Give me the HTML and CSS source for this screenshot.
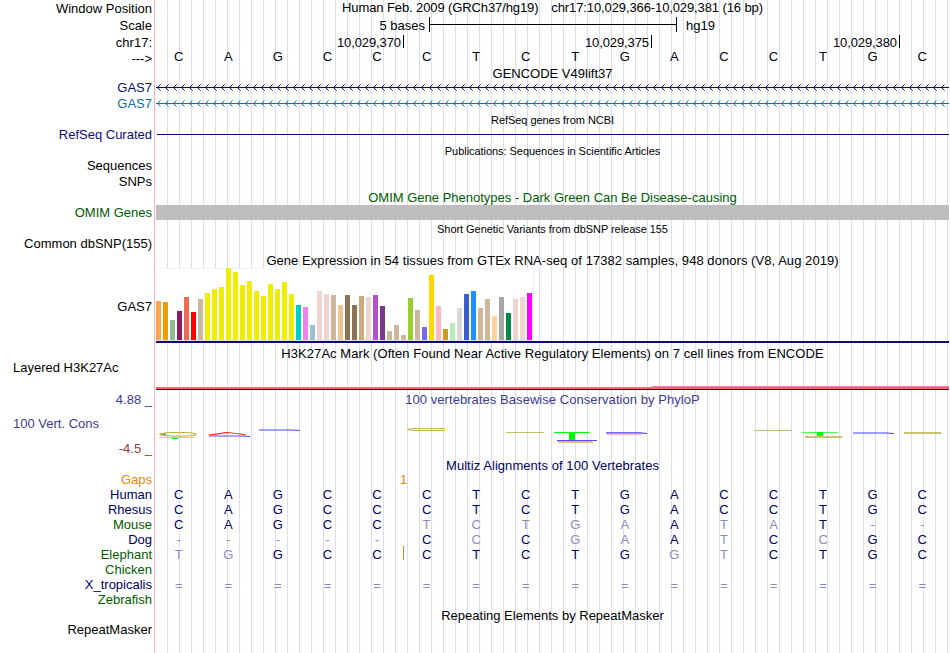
FILE: index.html
```
<!DOCTYPE html>
<html lang="en">
<head>
  <meta charset="UTF-8">
  <title>Human chr17:10,029,366-10,029,381 Genome Browser</title>
  <link rel="stylesheet" href="styles.css">
</head>
<body>
  <div class="browser">
    <div class="row h17">
      <div class="label">Window Position</div>
      <div class="plot position"><span>Human Feb. 2009 (GRCh37/hg19)</span><span>chr17:10,029,366-10,029,381 (16 bp)</span></div>
    </div>
    <div class="row h17">
      <div class="label">Scale</div>
      <div class="plot scale"><span class="scale-text">5 bases</span><span class="scale-bar"></span><span>hg19</span></div>
    </div>
    <div class="row h16">
      <div class="label low">chr17:</div>
      <div class="plot ruler"><span class="tick">10,029,370</span><span class="tick">10,029,375</span><span class="tick">10,029,380</span></div>
    </div>
    <div class="row h16">
      <div class="label low">---&gt;</div>
      <div class="plot bases black" data-seq="CAGCCCTCTGACCTGC"></div>
    </div>

    <div class="row h14"><div class="label"></div><div class="plot title">GENCODE V49lift37</div></div>
    <div class="row h15">
      <div class="label navy">GAS7</div>
      <svg class="plot gene navy" width="793" height="15">
        <defs>
          <pattern id="chevron" width="8" height="15" patternUnits="userSpaceOnUse">
            <path d="M4.5 4.5L1.5 7.5L4.5 10.5" fill="none" stroke="currentColor"/>
          </pattern>
        </defs>
        <rect width="793" height="15" fill="url(#chevron)"/>
        <rect y="7" width="793" height="1" fill="currentColor"/>
      </svg>
    </div>
    <div class="row h16">
      <div class="label blue low">GAS7</div>
      <svg class="plot gene blue" width="793" height="16">
        <defs>
          <pattern id="chevron2" width="8" height="16" patternUnits="userSpaceOnUse">
            <path d="M4.5 5.5L1.5 8.5L4.5 11.5" fill="none" stroke="currentColor"/>
          </pattern>
        </defs>
        <rect width="793" height="16" fill="url(#chevron2)"/>
        <rect y="8" width="793" height="1" fill="currentColor"/>
      </svg>
    </div>

    <div class="row h16"><div class="label"></div><div class="plot title small">RefSeq genes from NCBI</div></div>
    <div class="row h15">
      <div class="label navy">RefSeq Curated</div>
      <div class="plot"><div class="refseq-line"></div></div>
    </div>

    <div class="row h16"><div class="label"></div><div class="plot title small">Publications: Sequences in Scientific Articles</div></div>
    <div class="row h15"><div class="label">Sequences</div></div>
    <div class="row h16"><div class="label low">SNPs</div></div>

    <div class="row h16"><div class="label"></div><div class="plot title green">OMIM Gene Phenotypes - Dark Green Can Be Disease-causing</div></div>
    <div class="row h15">
      <div class="label green">OMIM Genes</div>
      <div class="plot omim-block"></div>
    </div>

    <div class="row h16"><div class="label"></div><div class="plot title small">Short Genetic Variants from dbSNP release 155</div></div>
    <div class="row h16"><div class="label">Common dbSNP(155)</div></div>

    <div class="row h16"><div class="label"></div><div class="plot title wide">Gene Expression in 54 tissues from GTEx RNA-seq of 17382 samples, 948 donors (V8, Aug 2019)</div></div>
    <div class="row h77">
      <div class="label">GAS7</div>
      <div class="plot gtex">
        <div class="bars" id="bars"></div>
        <div class="gene-model"></div>
      </div>
    </div>

    <div class="row h16"><div class="label"></div><div class="plot title wide">H3K27Ac Mark (Often Found Near Active Regulatory Elements) on 7 cell lines from ENCODE</div></div>
    <div class="row h30">
      <div class="label left">Layered H3K27Ac</div>
      <div class="plot h3k">
        <div class="h3k-pink"></div>
        <div class="h3k-red"></div>
      </div>
    </div>

    <div class="row h16">
      <div class="label cons low">4.88 _</div>
      <div class="plot title wide cons">100 vertebrates Basewise Conservation by PhyloP</div>
    </div>
    <div class="row h50">
      <div class="label cons-labels">
        <span class="cons cons-name">100 Vert. Cons</span>
        <span class="cons-min">-4.5 _</span>
      </div>
      <svg class="plot logo" width="793" height="50" viewBox="156 407 793 50" fill="none">
        <ellipse cx="178" cy="434.3" rx="18.5" ry="1.9" stroke="#aaa51e" stroke-width=".9"/>
        <path d="M159 434.3L166 433V435.6Z" fill="#aaa51e"/>
        <path d="M159 437.5H194" stroke="#f0a080" stroke-width=".7"/>
        <path d="M172 438.5H178" stroke="#00f000"/>
        <path d="M209 435Q219 434 226 432.5Q234 433 246 435" stroke="#ff2020" stroke-width="1.2"/>
        <path d="M209 436H240L250 436.5" stroke="#5050ff"/>
        <path d="M259 430H290L300 430.5" stroke="#4848ff"/>
        <path d="M445 428.6H415Q400 429.5 415 430.5H445" stroke="#aaa51e" stroke-width=".8"/>
        <path d="M506 432.5H544" stroke="#b4b03c" stroke-width=".8"/>
        <path d="M554 432.5H590" stroke="#00ff00"/>
        <path d="M569 432H575V440H569Z" fill="#00ff00"/>
        <path d="M557 440.5H597" stroke="#5050ff"/>
        <path d="M557 441.5H592" stroke="#ff9090" stroke-width=".8"/>
        <path d="M558 442.3H593" stroke="#b4b03c" stroke-width=".8"/>
        <path d="M606 432.8H640L647 433.5" stroke="#4040ff" stroke-width="1.2"/>
        <path d="M607 434.2H641" stroke="#ff7878" stroke-width=".8"/>
        <path d="M754 430.5H792" stroke="#b4b03c" stroke-width=".8"/>
        <path d="M802 432.5H838" stroke="#00ff00" stroke-width=".7"/>
        <path d="M817 432H823V436H817Z" fill="#00ff00"/>
        <path d="M805 437H842" stroke="#b4b03c" stroke-width="1.3"/>
        <path d="M853 433H886L894 433.5" stroke="#4040ff" stroke-width="1.2"/>
        <path d="M904 433H941" stroke="#b4b03c" stroke-width="1.3"/>
      </svg>
    </div>

    <div class="row h15"><div class="label"></div><div class="plot title wide dark">Multiz Alignments of 100 Vertebrates</div></div>
    <div class="row h15">
      <div class="label orange">Gaps</div>
      <div class="plot gaps orange">1</div>
    </div>
    <!-- lower case bases differ from human -->
    <div class="row h15"><div class="label dark">Human</div><div class="plot bases" data-seq="CAGCCCTCTGACCTGC"></div></div>
    <div class="row h15"><div class="label dark">Rhesus</div><div class="plot bases" data-seq="CAGCCCTCTGACCTGC"></div></div>
    <div class="row h15"><div class="label green">Mouse</div><div class="plot bases" data-seq="CAGCCtctgaAtaT--"></div></div>
    <div class="row h15"><div class="label dark">Dog</div><div class="plot bases" data-seq="-----CcCgaAtCcGC"></div></div>
    <div class="row h15"><div class="label green">Elephant</div><div class="plot bases insert" data-seq="tgGCCCTCTGgtCTGC"></div></div>
    <div class="row h15"><div class="label green">Chicken</div></div>
    <div class="row h15"><div class="label dark">X_tropicalis</div><div class="plot bases unaligned" data-seq="================"></div></div>
    <div class="row h15"><div class="label green">Zebrafish</div></div>

    <div class="row h15"><div class="label"></div><div class="plot title">Repeating Elements by RepeatMasker</div></div>
    <div class="row h15"><div class="label">RepeatMasker</div></div>
  </div>
  <script src="script.js"></script>
</body>
</html>
```

FILE: styles.css
```
body {
  margin: 0;
  background-color: #fff;
  font-family: "Liberation Sans", Arial, Helvetica, sans-serif;
  font-size: 13px;
  color: #000;
}
.browser {
  width: 949px;
  height: 653px;
  overflow: hidden;
  background-image:
    linear-gradient(#ffb4b4, #ffb4b4),
    repeating-linear-gradient(to right, #dcdcf8 0, #dcdcf8 1px, transparent 1px, transparent 12px);
  background-size: 1px 100%, 782px 100%;
  background-position: 154px 0, 167px 0;
  background-repeat: no-repeat;
}
.row {
  display: flex;
  white-space: nowrap;
}
.h14 { height: 14px; line-height: 14px; }
.h15 { height: 15px; line-height: 15px; }
.h16 { height: 16px; line-height: 16px; }
.h17 { height: 17px; line-height: 17px; }
.h30 { height: 30px; line-height: 14px; }
.h50 { height: 50px; line-height: 16px; }
.h77 { height: 77px; line-height: 77px; }
.label {
  width: 152px;
  margin-right: 4px;
  text-align: right;
  flex-shrink: 0;
}
.label.left {
  width: 139px;
  padding-left: 13px;
  text-align: left;
}
.label.low {
  padding-top: 1px;
}
.plot {
  width: 793px;
  flex-shrink: 0;
}
.title {
  padding-top: 1px;
  text-align: center;
}
.wide {
  letter-spacing: 0.055px;
}
.small {
  font-size: 11px;
  letter-spacing: -0.05px;
}
.navy { color: #0c0c78; }
.blue { color: #0c6eb4; }
.dark { color: #00005f; }
.green { color: #005a00; }
.orange { color: #e8870a; }
.cons { color: #3c3c8c; }
.position {
  display: flex;
  justify-content: center;
  gap: 13px;
  line-height: 15px;
  letter-spacing: -0.11px;
}

/* scale and ruler */
.scale {
  display: flex;
}
.scale-text {
  width: 269px;
  text-align: right;
}
.scale-bar {
  width: 246px;
  height: 15px;
  margin: 0 9px 0 4px;
  border: solid #000;
  border-width: 0 1px;
  background: linear-gradient(#000, #000) 0 7px / 100% 1px no-repeat;
}
.ruler {
  display: flex;
}
.tick {
  box-sizing: border-box;
  width: 248px;
  height: 13px;
  margin-top: 1px;
  padding-right: 2px;
  border-right: 1px solid #000;
  line-height: 15px;
  letter-spacing: -0.1px;
  text-align: right;
}

/* sequence rows */
.bases {
  display: grid;
  grid-template-columns: repeat(16, 1fr);
  margin-left: -2px;
  text-align: center;
  color: #00005f;
}
.bases.black {
  color: #000;
  line-height: 14px;
}
.bases.unaligned {
  padding-top: 1px;
}
.bases .diff {
  color: #8c8cb9;
}
.insert {
  position: relative;
}
.insert::after {
  content: "";
  position: absolute;
  left: 249px;
  top: -1px;
  width: 1px;
  height: 14px;
  background-color: #d08a28;
}
.gaps {
  box-sizing: border-box;
  padding-left: 244px;
}

/* tracks */
.refseq-line {
  height: 1px;
  margin: 7px 0 0 1px;
  background-color: #0c0c78;
}
.omim-block {
  background-color: #bebebe;
}
.bars {
  box-sizing: border-box;
  display: flex;
  align-items: flex-end;
  gap: 2px;
  width: 378px;
  height: 73px;
  background-color: #fff;
  box-shadow: inset 0 1px #f0f0f0, inset -1px 0 #f0f0f0, inset 0 -1px #dcdcdc;
  padding-bottom: 1px;
}
.bar {
  width: 5px;
}
.gene-model {
  height: 2px;
  background-color: #0c0c78;
}
.h3k-pink {
  height: 1px;
  margin: 25px 0 0 496px;
  background-color: #ff78c8;
}
.h3k-red {
  height: 2px;
  background-color: #ff6464;
  border-bottom: 1px solid #3c0a1e;
}
.cons-labels {
  display: flex;
  flex-direction: column;
}
.cons-name {
  padding: 9px 0 9px 13px;
  text-align: left;
}
.cons-min {
  color: #8c3c3c;
}
```

FILE: script.js
```
// GTEx median expression per tissue: [height, color]
const tissues = [
  [39, '#ffa54f'], [38, '#f49b00'], [20, '#8fbc8f'], [29, '#8b1c62'], [43, '#ee6a50'], [28, '#ff0000'],
  [41, '#cdb79e'], [47, '#eeee00'], [51, '#eeee00'], [53, '#eeee00'], [72, '#eeee00'], [68, '#eeee00'],
  [55, '#eeee00'], [59, '#eeee00'], [49, '#eeee00'], [44, '#eeee00'], [56, '#eeee00'], [51, '#eeee00'],
  [58, '#eeee00'], [46, '#eeee00'], [35, '#00cdcd'], [33, '#ee82ee'], [15, '#9ac0cd'], [49, '#eed5d2'],
  [46, '#eed5d2'], [45, '#cdb79e'], [35, '#eec591'], [45, '#8b7355'], [35, '#8b7355'], [44, '#cdaa7d'],
  [43, '#eed5d2'], [45, '#b452cd'], [34, '#7a378b'], [9, '#cdb79e'], [15, '#cdb79e'], [5, '#cdb79e'],
  [42, '#9acd32'], [30, '#cdb79e'], [13, '#7a67ee'], [65, '#ffd700'], [34, '#ffb6c1'], [11, '#cd9b1d'],
  [17, '#b4eeb4'], [32, '#d9d9d9'], [46, '#3a5fcd'], [49, '#1e90ff'], [32, '#cdb79e'], [41, '#cdb79e'],
  [24, '#ffd39b'], [43, '#a6a6a6'], [27, '#008b45'], [41, '#eed5d2'], [43, '#eed5d2'], [47, '#ff00ff']
];

const bars = document.getElementById('bars');
tissues.forEach(([height, color]) => {
  const bar = document.createElement('div');
  bar.className = 'bar';
  bar.style.height = height + 'px';
  bar.style.backgroundColor = color;
  bars.appendChild(bar);
});

document.querySelectorAll('.bases').forEach(row => {
  for (const base of row.dataset.seq) {
    const cell = document.createElement('span');
    cell.textContent = base.toUpperCase();
    if (!/[ACGT]/.test(base)) cell.className = 'diff';
    row.appendChild(cell);
  }
});
```
